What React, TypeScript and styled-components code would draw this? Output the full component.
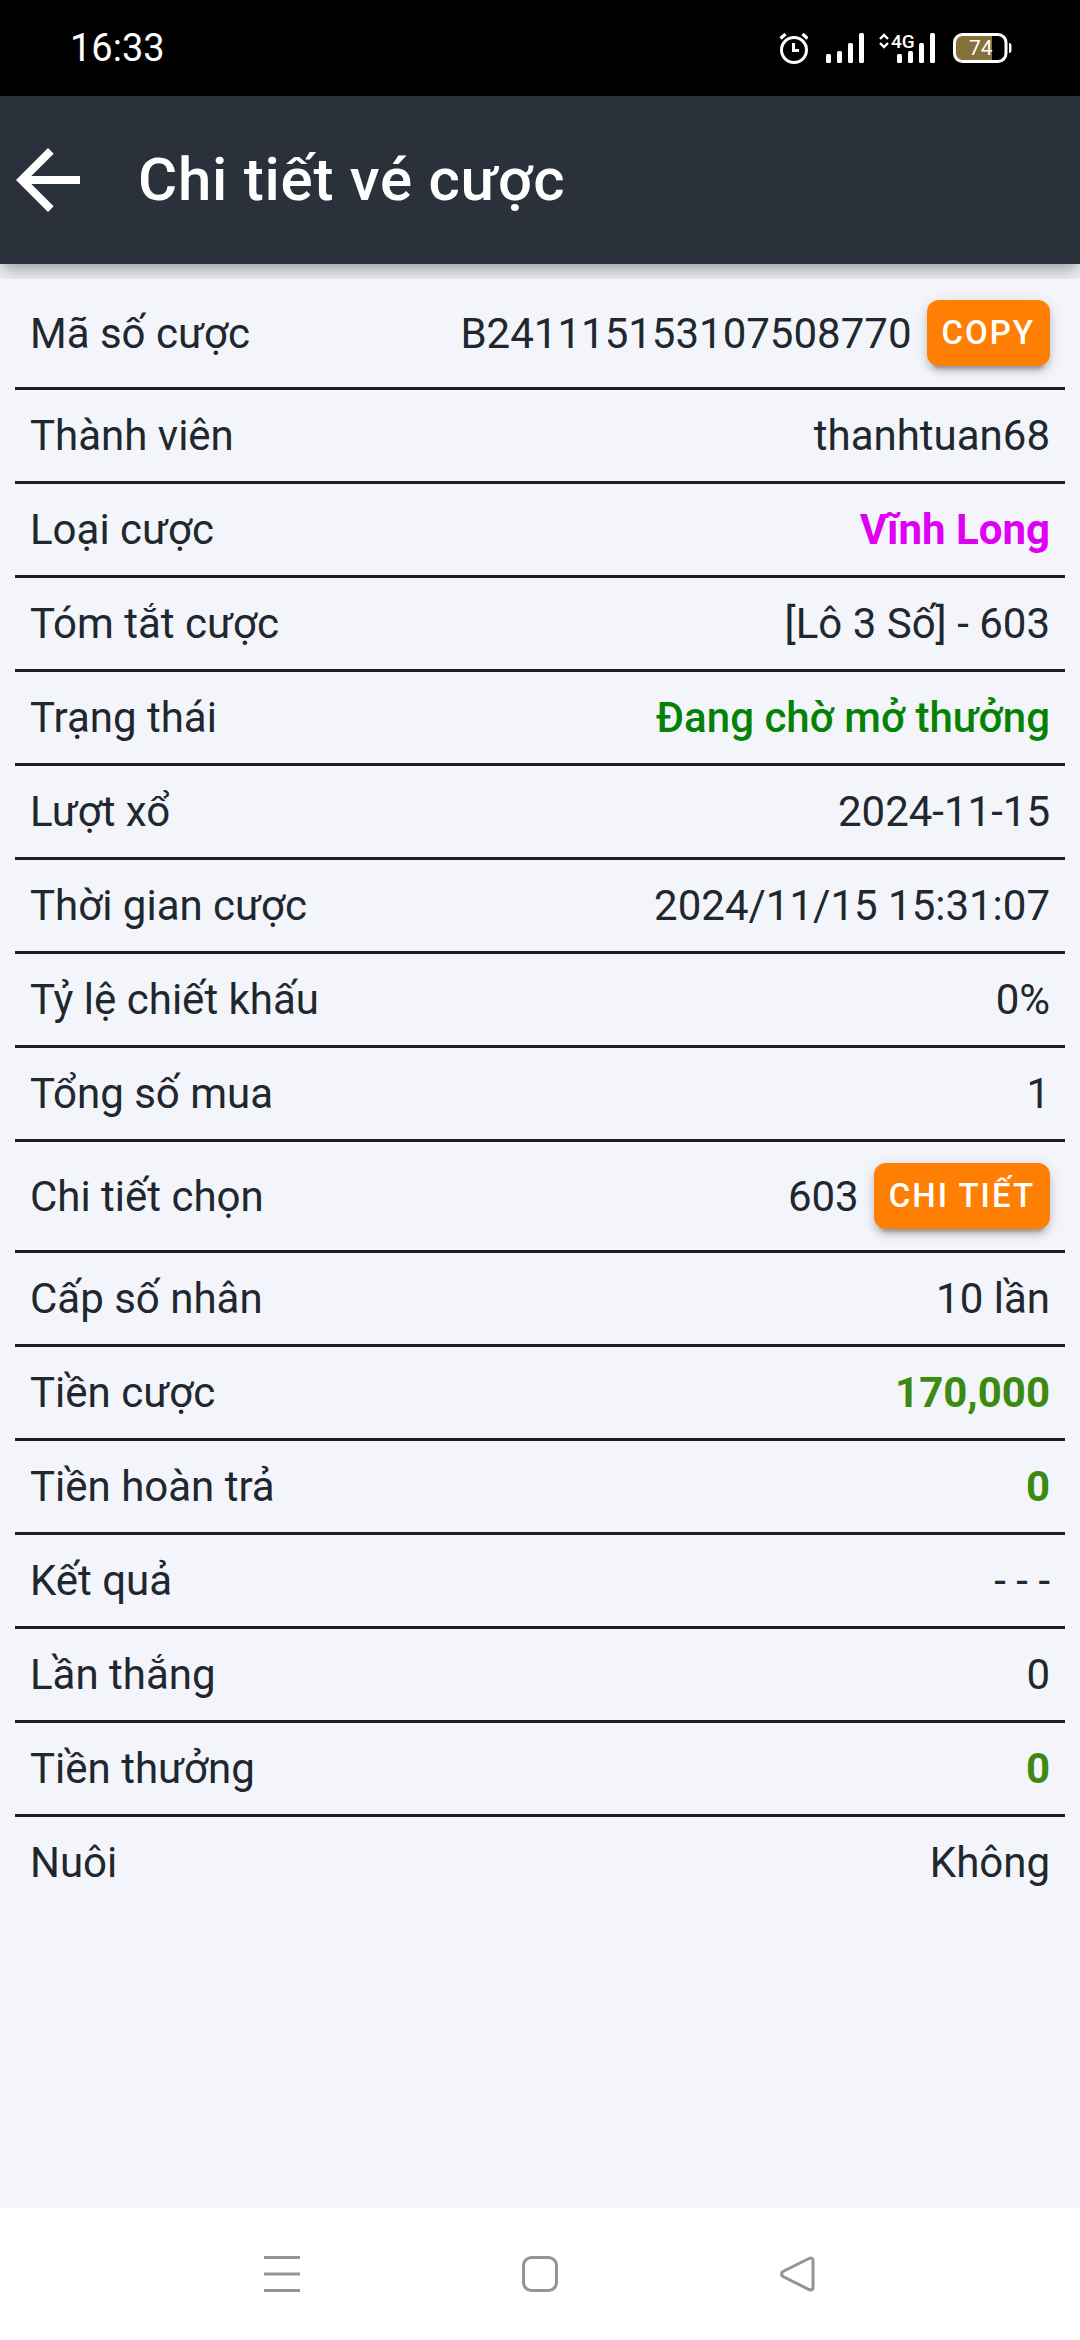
import React from "react";
import styled, { createGlobalStyle } from "styled-components";

const GlobalStyle = createGlobalStyle`
  *, *::before, *::after { box-sizing: border-box; }
  body {
    margin: 0;
    background: #f3f5fa;
    color: #20272e;
    font-family: Roboto, "Noto Sans", sans-serif;
  }
`;

const Screen = styled.div`
  display: flex;
  flex-direction: column;
  min-height: 100vh;
`;

const StatusBar = styled.div`
  display: flex;
  align-items: center;
  justify-content: space-between;
  height: 96px;
  padding: 0 68px 0 70px;
  background: #000;
  color: #fff;
`;

const Clock = styled.time`
  font-size: 38px;
  line-height: 48px;
`;

const StatusIcons = styled.div`
  display: flex;
  align-items: center;
`;

const StatusGlyph = styled.svg<{ $gap?: number }>`
  display: block;
  margin-left: ${(p) => p.$gap ?? 0}px;
`;

const AppBar = styled.header`
  display: flex;
  align-items: center;
  gap: 58px;
  height: 168px;
  padding: 0 16px;
  background: #2b313b;
  color: #fff;
  box-shadow: 0 6px 12px -3px rgba(0, 0, 0, 0.2), 0 12px 15px rgba(0, 0, 0, 0.12),
    0 3px 30px rgba(0, 0, 0, 0.08);
`;

const BackButton = styled.button`
  display: flex;
  align-items: center;
  justify-content: center;
  width: 64px;
  height: 64px;
  padding: 0;
  border: 0;
  background: none;
  color: inherit;
`;

const Title = styled.h1`
  margin: 0;
  font-size: 60px;
  font-weight: 500;
  line-height: 72px;
  letter-spacing: 0.0125em;
`;

const Content = styled.main`
  flex: 1;
  margin-top: 15px;
  padding: 0 15px 15px;
  background: #f3f5fa;
`;

const Details = styled.dl`
  margin: 0;
`;

const Row = styled.div`
  display: flex;
  align-items: center;
  justify-content: space-between;
  padding: 21px 15px;
  border-bottom: 3px solid #1c1d25;
  font-size: 42px;
  line-height: 49px;

  &:last-child {
    border-bottom: 0;
  }
`;

const Label = styled.dt`
  margin: 0;
`;

const tones = {
  plain: { color: "inherit", weight: 400 },
  region: { color: "#de00f5", weight: 700 },
  status: { color: "#058205", weight: 500 },
  money: { color: "#3b8a12", weight: 700 },
};

type Tone = keyof typeof tones;

const Value = styled.dd<{ $tone: Tone }>`
  display: flex;
  align-items: center;
  gap: 15px;
  margin: 0;
  color: ${(p) => tones[p.$tone].color};
  font-weight: ${(p) => tones[p.$tone].weight};
`;

const ActionButton = styled.button`
  height: 66px;
  padding: 0 15px;
  border: 0;
  border-radius: 12px;
  background: #ff7f04;
  color: #fff;
  font-family: inherit;
  font-size: 33px;
  font-weight: 500;
  line-height: 48px;
  letter-spacing: 2px;
  text-transform: uppercase;
  box-shadow: 0 9px 3px -6px rgba(0, 0, 0, 0.2), 0 6px 6px rgba(0, 0, 0, 0.14),
    0 3px 15px rgba(0, 0, 0, 0.12);
`;

const NavBar = styled.nav`
  display: flex;
  height: 132px;
  padding: 0 153px;
  background: #fff;
`;

const NavButton = styled.button`
  display: flex;
  flex: 1;
  align-items: center;
  justify-content: center;
  padding: 0;
  border: 0;
  background: none;
  color: #949494;
`;

type Item = { label: string; value: string; tone?: Tone; action?: string };

const items: Item[] = [
  { label: "Mã số cược", value: "B241115153107508770", action: "Copy" },
  { label: "Thành viên", value: "thanhtuan68" },
  { label: "Loại cược", value: "Vĩnh Long", tone: "region" },
  { label: "Tóm tắt cược", value: "[Lô 3 Số] - 603" },
  { label: "Trạng thái", value: "Đang chờ mở thưởng", tone: "status" },
  { label: "Lượt xổ", value: "2024-11-15" },
  { label: "Thời gian cược", value: "2024/11/15 15:31:07" },
  { label: "Tỷ lệ chiết khấu", value: "0%" },
  { label: "Tổng số mua", value: "1" },
  { label: "Chi tiết chọn", value: "603", action: "Chi tiết" },
  { label: "Cấp số nhân", value: "10 lần" },
  { label: "Tiền cược", value: "170,000", tone: "money" },
  { label: "Tiền hoàn trả", value: "0", tone: "money" },
  { label: "Kết quả", value: "- - -" },
  { label: "Lần thắng", value: "0" },
  { label: "Tiền thưởng", value: "0", tone: "money" },
  { label: "Nuôi", value: "Không" },
];

function AlarmIcon() {
  return (
    <StatusGlyph width="30" height="32" viewBox="0 0 30 32" fill="none" stroke="#fff">
      <circle cx="16" cy="18" r="12.5" strokeWidth="3" />
      <path d="M15.500 11v7.500h5.500" strokeWidth="3" />
      <path d="M2.500 6.500l5-4.500M29.500 6.500l-5-4.500" strokeWidth="3.2" />
    </StatusGlyph>
  );
}

function SignalBars() {
  return (
    <g fill="#fff">
      <rect x="0" y="21" width="5" height="9" rx="1.5" />
      <rect x="11" y="18" width="5" height="12" rx="1.5" />
      <rect x="22" y="10" width="5" height="20" rx="1.5" />
      <rect x="33" y="0" width="5" height="30" rx="1.5" />
    </g>
  );
}

function SignalIcon() {
  return (
    <StatusGlyph $gap={18} width="38" height="30" viewBox="0 0 38 30">
      <SignalBars />
    </StatusGlyph>
  );
}

function MobileDataIcon() {
  return (
    <StatusGlyph $gap={15} width="56" height="42" viewBox="0 -6 56 42">
      <path d="M1 6l4-4 4 4M1 10l4 4 4-4" fill="none" stroke="#fff" strokeWidth="2.4" />
      <text x="12" y="15" fill="#fff" fontFamily="Roboto" fontSize="19" fontWeight="500">
        4G
      </text>
      <g transform="translate(18 0)">
        <SignalBars />
      </g>
    </StatusGlyph>
  );
}

function BatteryIcon() {
  return (
    <StatusGlyph $gap={18} width="59" height="30" viewBox="0 0 59 30">
      <path d="M9 2.5h30v25H9q-7.500 0-7.500-7v-11q0-7 7.500-7z" fill="#84713c" />
      <rect x="1.500" y="1.500" width="51.500" height="27" rx="8" fill="none" stroke="#fff" strokeWidth="3" />
      <path d="M56 10q2.500 0 2.500 3v4q0 3-2.500 3z" fill="#fff" />
      <text x="16" y="22" fill="#fff" fontFamily="Roboto" fontSize="21">
        74
      </text>
    </StatusGlyph>
  );
}

export default function App() {
  return (
    <Screen>
      <GlobalStyle />
      <StatusBar>
        <Clock>16:33</Clock>
        <StatusIcons>
          <AlarmIcon />
          <SignalIcon />
          <MobileDataIcon />
          <BatteryIcon />
        </StatusIcons>
      </StatusBar>

      <AppBar>
        <BackButton type="button" aria-label="Quay lại">
          <svg width="64" height="64" viewBox="4 4 16 16" fill="currentColor">
            <path d="M20 11H7.830l5.590-5.590L12 4l-8 8 8 8 1.410-1.410L7.830 13H20v-2z" />
          </svg>
        </BackButton>
        <Title>Chi tiết vé cược</Title>
      </AppBar>

      <Content>
        <Details>
          {items.map(({ label, value, tone = "plain", action }) => (
            <Row key={label}>
              <Label>{label}</Label>
              <Value $tone={tone}>
                {value}
                {action && <ActionButton type="button">{action}</ActionButton>}
              </Value>
            </Row>
          ))}
        </Details>
      </Content>

      <NavBar>
        <NavButton type="button" aria-label="Menu">
          <svg width="36" height="36" viewBox="0 0 36 36" fill="none" stroke="currentColor" strokeWidth="3">
            <path d="M0 1.500h36M0 18h36M0 34.500h36" />
          </svg>
        </NavButton>
        <NavButton type="button" aria-label="Trang chủ">
          <svg width="36" height="36" viewBox="0 0 36 36" fill="none" stroke="currentColor" strokeWidth="3">
            <rect x="1.500" y="1.500" width="33" height="33" rx="8" />
          </svg>
        </NavButton>
        <NavButton type="button" aria-label="Trở về">
          <svg width="36" height="36" viewBox="0 0 36 36" fill="none" stroke="currentColor" strokeWidth="3">
            <path d="M29 2.500L3 15.500q-3 2.500 0 5L29 33.500q4 1.500 4-2v-27q0-3.500-4-2z" />
          </svg>
        </NavButton>
      </NavBar>
    </Screen>
  );
}
